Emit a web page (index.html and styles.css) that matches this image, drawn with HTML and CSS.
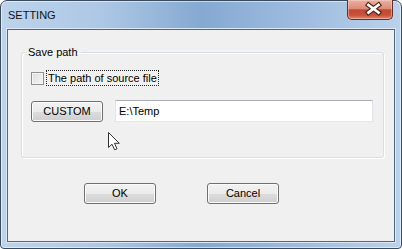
FILE: index.html
```html
<!DOCTYPE html>
<html>
<head>
    <title>SETTING</title>
    <link rel="stylesheet" href="styles.css">
</head>
<body>
    <div class="window">
        <div class="titlebar">
            <span class="title">SETTING</span>
            <div class="close">
                <svg width="46" height="19" viewBox="0 0 46 19">
                    <path d="M20.5 6 L30.5 13.5 M30.5 6 L20.5 13.5" stroke="#4b2019" stroke-width="5" stroke-linecap="square" fill="none"/>
                    <path d="M20.5 6 L30.5 13.5 M30.5 6 L20.5 13.5" stroke="#fff" stroke-width="2.8" stroke-linecap="square" fill="none"/>
                </svg>
            </div>
        </div>
        <div class="client">
            <fieldset class="group">
                <legend>Save path</legend>
                <div class="check-row">
                    <span class="checkbox"></span>
                    <span class="check-label">The path of source file</span>
                </div>
                <div class="path-row">
                    <div class="button custom">CUSTOM</div>
                    <div class="textbox">E:\Temp</div>
                </div>
            </fieldset>
            <div class="actions">
                <div class="button">OK</div>
                <div class="button">Cancel</div>
            </div>
            <svg class="cursor" width="13" height="19" viewBox="0 0 13 19">
                <path d="M0.5 0.5 L0.5 15.5 L4 12.2 L6.6 17.8 L9 16.8 L6.5 11.3 L11.3 11.3 Z" fill="#fff" stroke="#333" stroke-width="1" stroke-linejoin="miter"/>
            </svg>
        </div>
    </div>
</body>
</html>
```

FILE: styles.css
```css
html, body {
    margin: 0;
    padding: 0;
}
body {
    width: 402px;
    height: 249px;
    overflow: hidden;
    font-family: "Liberation Sans", Arial, sans-serif;
    font-size: 11px;
    color: #000;
}
.window {
    box-sizing: border-box;
    width: 402px;
    height: 249px;
    border: 1px solid #3b4a5c;
    border-radius: 7px 7px 4px 4px;
    background: linear-gradient(90deg, #bcd3eb 0%, #adc8e5 25%, #86a9d1 50%, #9dbbdf 74%, #bad2ea 100%);
    box-shadow: inset 0 0 0 1px rgba(255, 255, 255, 0.55);
    padding: 0 6px 6px 6px;
    display: flex;
    flex-direction: column;
}
.titlebar {
    height: 28px;
    display: flex;
    align-items: center;
}
.title {
    padding-left: 1px;
    color: #111;
    font-size: 11px;
}
.close {
    margin-left: auto;
    margin-right: 2px;
    margin-top: -1px;
    align-self: flex-start;
    width: 46px;
    height: 20px;
    box-sizing: border-box;
    border: 1px solid #6a2c24;
    border-top: none;
    border-radius: 0 0 5px 5px;
    background: linear-gradient(#eab0a2 0%, #dc8c79 45%, #c4472f 52%, #c8523a 80%, #de8a70 100%);
    box-shadow: inset 0 0 0 1px rgba(255, 220, 210, 0.45);
}
.close svg {
    display: block;
    margin-top: -1px;
}
.client {
    position: relative;
    flex: 1;
    background: #f0f0f0;
    border: 1px solid #51667f;
    box-shadow: 0 0 0 1px #dce8f5;
}
.group {
    margin: 16px 10px 0 13px;
    padding: 11px 10px 35px 9px;
    border: 1px solid #d5dfe5;
    border-radius: 3px;
    box-shadow: inset 1px 1px 0 #fff, 1px 1px 0 #fff;
}
.group legend {
    margin-left: -6px;
    padding: 0 3px;
    line-height: 13px;
}
.check-row {
    display: flex;
    align-items: center;
    height: 16px;
}
.checkbox {
    width: 13px;
    height: 13px;
    box-sizing: border-box;
    border: 1px solid #8e8f8f;
    background: linear-gradient(135deg, #dcdcdc, #f6f6f6);
    box-shadow: inset 0 0 0 1px #f4f4f4;
}
.check-label {
    margin-left: 2px;
    padding: 0 1px;
    line-height: 14px;
    border: 1px dotted #222;
}
.path-row {
    display: flex;
    align-items: flex-start;
    margin-top: 14px;
}
.button {
    box-sizing: border-box;
    width: 72px;
    height: 21px;
    line-height: 19px;
    text-align: center;
    border: 1px solid #707070;
    border-radius: 3px;
    background: linear-gradient(#f2f2f2 0%, #ebebeb 50%, #dddddd 51%, #cfcfcf 100%);
    box-shadow: inset 0 0 0 1px #fbfbfb;
}
.custom {
    margin-top: 1px;
}
.textbox {
    flex: 1;
    margin-left: 12px;
    box-sizing: border-box;
    height: 22px;
    line-height: 20px;
    padding-left: 3px;
    background: #fff;
    border: 1px solid #e2e3ea;
    border-top-color: #abadb3;
    border-bottom-color: #e3e9ef;
}
.actions {
    display: flex;
    gap: 51px;
    margin-top: 25px;
    padding-left: 76px;
}
.cursor {
    position: absolute;
    left: 100px;
    top: 102px;
}
```
